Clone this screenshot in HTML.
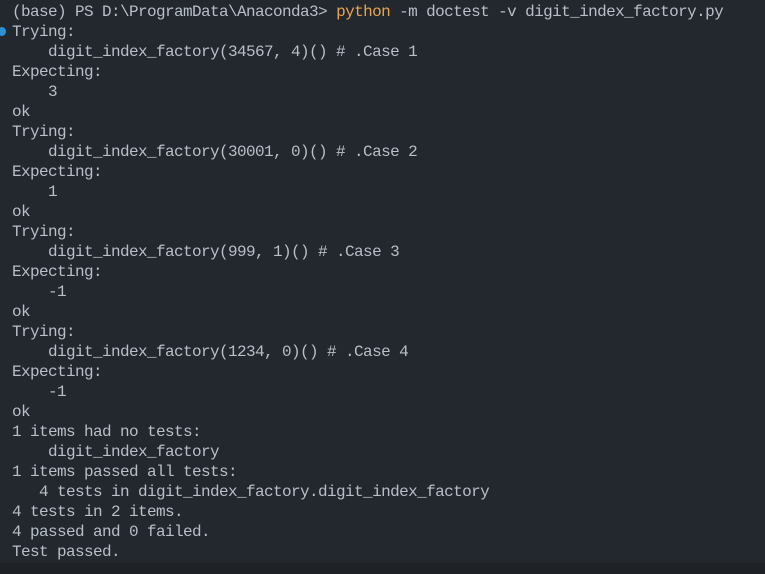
<!DOCTYPE html><html><head><style>
body{margin:0;width:765px;height:574px;background:#23272e;overflow:hidden;position:relative}
pre{margin:0;position:absolute;left:12px;top:2px;font:16px/20px "Liberation Mono",monospace;color:#b8bfc9;letter-spacing:-0.6px}
.o{color:#e8a451}
.dot{position:absolute;left:-2px;top:27px;width:8px;height:9px;border-radius:50%;background:#2f8fd0}
.bot{position:absolute;left:0;top:563px;width:765px;height:11px;background:#1e2227}
</style></head><body>
<div class="dot"></div>
<pre>(base) PS D:\ProgramData\Anaconda3&gt; <span class="o">python</span> -m doctest -v digit_index_factory.py
Trying:
    digit_index_factory(34567, 4)() # .Case 1
Expecting:
    3
ok
Trying:
    digit_index_factory(30001, 0)() # .Case 2
Expecting:
    1
ok
Trying:
    digit_index_factory(999, 1)() # .Case 3
Expecting:
    -1
ok
Trying:
    digit_index_factory(1234, 0)() # .Case 4
Expecting:
    -1
ok
1 items had no tests:
    digit_index_factory
1 items passed all tests:
   4 tests in digit_index_factory.digit_index_factory
4 tests in 2 items.
4 passed and 0 failed.
Test passed.</pre>
<div class="bot"></div>
</body></html>
